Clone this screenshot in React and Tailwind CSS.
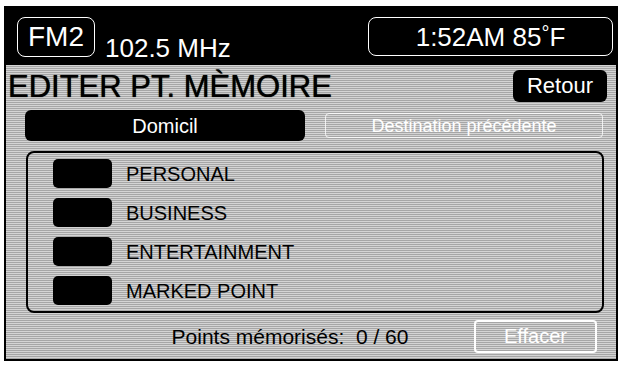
import React from 'react'

const items = ['PERSONAL', 'BUSINESS', 'ENTERTAINMENT', 'MARKED POINT']

// dithered LCD-ish grey used behind the menu
const dither =
  "bg-[#d4d4d4] [background-image:repeating-linear-gradient(0deg,#a6a6a6_0_1px,transparent_1px_2px)]"

export default function App() {
  return (
    <div className="w-[621px] h-[365px] bg-white pt-[6px] pl-[4px] font-['Liberation_Sans',Arial,sans-serif]">
      <div className="w-[614px] h-[355px] border-2 border-black flex flex-col">
        {/* status band */}
        <div className="h-[57px] bg-black flex items-center pl-[11px] pr-[3px]">
          <div className="w-[78px] h-[40px] border-[1.5px] border-white rounded-[8px] flex items-center justify-center text-white text-[28px] leading-none">
            FM2
          </div>
          <div className="ml-[10px] self-end mb-[4px] text-white text-[26px] leading-none">102.5 MHz</div>
          <div className="ml-auto w-[245px] h-[39px] border-[1.5px] border-white rounded-[8px] flex items-center justify-center text-white text-[26px] leading-none">
            1:52AM 85<span className="text-[20px] -mt-[8px]">°</span>F
          </div>
        </div>

        <div className={`flex-1 flex flex-col ${dither}`}>
          {/* title row */}
          <div className="mt-[5px] h-[32px] flex items-center pl-[2px] pr-[9px]">
            <h1 className="text-[31px] leading-none text-black [text-shadow:0_0_1px_#000]">EDITER PT. MÈMOIRE</h1>
            <button className="ml-auto w-[94px] h-[32px] bg-black rounded-[6px] text-white text-[22px] leading-none">
              Retour
            </button>
          </div>

          {/* tabs */}
          <div className="mt-[8px] flex items-center pl-[19px]">
            <div className="w-[280px] h-[31px] bg-black rounded-[6px] flex items-center justify-center text-white text-[20px] leading-none">
              Domicil
            </div>
            <div className="ml-[20px] w-[278px] h-[25px] border border-white/80 rounded-[4px] flex items-center justify-center text-white text-[18px] leading-none">
              Destination précédente
            </div>
          </div>

          {/* memory list */}
          <div className="mt-[10px] ml-[20px] w-[578px] h-[162px] border-2 border-black rounded-[8px] pt-[6px] pl-[25px] flex flex-col gap-[10px]">
            {items.map((name) => (
              <div key={name} className="flex items-center h-[29px]">
                <div className="w-[59px] h-[29px] bg-black rounded-[5px]" />
                <span className="ml-[14px] text-[20px] leading-none text-black">{name}</span>
              </div>
            ))}
          </div>

          {/* footer */}
          <div className="flex-1 flex items-center pr-[19px]">
            <div className="flex-1 text-center pl-[100px] text-[21px] leading-none text-black">
              Points mémorisés:&nbsp; 0 / 60
            </div>
            <div className="w-[123px] h-[33px] border-2 border-white rounded-[4px] flex items-center justify-center text-white text-[20px] leading-none">
              Effacer
            </div>
          </div>
        </div>
      </div>
    </div>
  )
}
